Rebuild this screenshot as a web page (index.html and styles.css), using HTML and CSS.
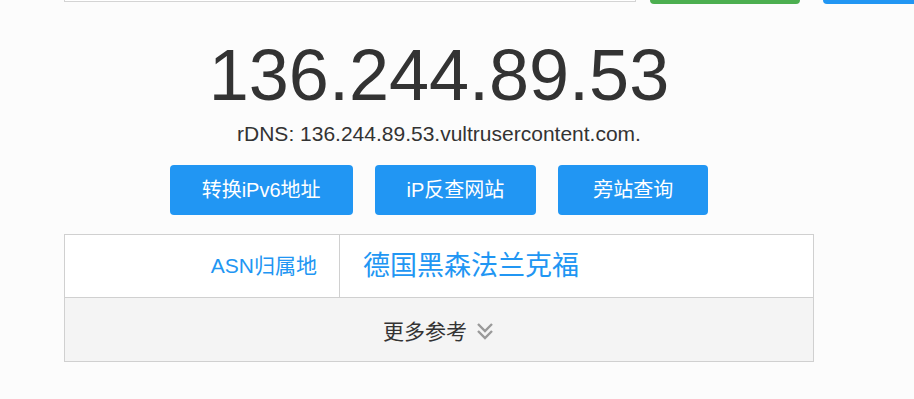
FILE: index.html
```html
<!DOCTYPE html>
<html>
	<head>
		<meta charset="UTF-8">
		<title>136.244.89.53</title>
		<link rel="stylesheet" href="styles.css">
	</head>
	<body>
		<div id="main">
			<div class="search">
				<input type="text" class="search_ipt" />
				<div class="search_btn green"></div>
				<div class="search_btn blue"></div>
			</div>
			<div class="ip">136.244.89.53</div>
			<div class="rdns">rDNS: 136.244.89.53.vultrusercontent.com.</div>
			<div class="btns">
				<a class="btn">转换iPv6地址</a>
				<a class="btn">iP反查网站</a>
				<a class="btn">旁站查询</a>
			</div>
			<div class="info">
				<div class="row">
					<div class="label">ASN归属地</div>
					<div class="value">德国黑森法兰克福</div>
				</div>
				<div class="more">
					<span>更多参考</span>
					<svg width="20" height="20" viewBox="0 0 20 20">
						<polyline points="3,3 10,10 17,3" fill="none" stroke="#999" stroke-width="2.4" />
						<polyline points="3,10 10,17 17,10" fill="none" stroke="#999" stroke-width="2.4" />
					</svg>
				</div>
			</div>
		</div>
	</body>
</html>
```

FILE: styles.css
```css
html,body{
	margin:0;
	background:#fcfcfc;
	overflow:hidden;
}
body{
	font-family:"Liberation Sans","Noto Sans CJK SC",sans-serif;
	color:#333;
}
#main{
	width:750px;
	margin-left:64px;
}
.search{
	display:flex;
	align-items:flex-start;
	margin-top:-36px;
	width:910px;
}
.search_ipt{
	box-sizing:border-box;
	width:572px;
	height:38px;
	margin:0;
	border:1px solid #d4d4d4;
	background:#fff;
}
.search_btn{
	flex:none;
	width:150px;
	height:40px;
	border-radius:4px;
}
.green{
	margin-left:14px;
	background:#4caf50;
}
.blue{
	margin-left:23px;
	background:#2196f3;
}
.ip{
	margin-top:31px;
	font-size:72px;
	line-height:80px;
	text-align:center;
}
.rdns{
	margin-top:7px;
	font-size:21px;
	line-height:24px;
	text-align:center;
}
.btns{
	display:flex;
	justify-content:center;
	gap:22px;
	margin-top:19px;
}
.btn{
	height:50px;
	line-height:50px;
	padding:0 32px;
	border-radius:4px;
	background:#2196f3;
	color:#fff;
	font-size:20px;
	cursor:pointer;
}
.btn:last-child{
	padding:0 35px;
}
.info{
	margin-top:19px;
	border:1px solid #d0d0d0;
	background:#fff;
}
.row{
	display:flex;
	height:62px;
	border-bottom:1px solid #d0d0d0;
}
.label{
	box-sizing:border-box;
	width:275px;
	padding-right:22px;
	border-right:1px solid #d0d0d0;
	text-align:right;
	line-height:62px;
	font-size:21px;
	color:#2196f3;
}
.value{
	padding-left:23px;
	line-height:62px;
	font-size:27px;
	color:#2196f3;
}
.more{
	display:flex;
	align-items:center;
	justify-content:center;
	gap:8px;
	height:63px;
	background:#f4f4f4;
	font-size:21px;
	cursor:pointer;
}
.more svg{
	margin-top:2px;
}
```
